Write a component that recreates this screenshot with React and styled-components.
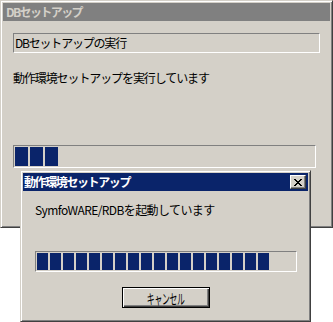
import React from "react";
import styled, { createGlobalStyle } from "styled-components";

const Global = createGlobalStyle`
  html, body { margin: 0; padding: 0; background: #ffffff; }
  body { font-family: "Noto Sans CJK JP", "Noto Sans", sans-serif; font-size: 12px; }
`;

const FACE = "#d4d0c8";
const NAVY = "#0a246a";

const Desktop = styled.div`
  position: relative;
  width: 333px;
  height: 322px;
  overflow: hidden;
  background: #ffffff;
`;

const Window = styled.div`
  box-sizing: border-box;
  background: ${FACE};
  border-style: solid;
  border-width: 1px;
  border-color: ${FACE} #404040 #404040 ${FACE};
  box-shadow: inset 1px 1px 0 #ffffff, inset -1px -1px 0 #808080;
  padding: 2px;
  display: flex;
  flex-direction: column;
`;

const MainWindow = styled(Window)`
  width: 333px;
  height: 228px;
`;

const Dialog = styled(Window)`
  position: absolute;
  left: 20px;
  top: 170px;
  width: 291px;
  height: 152px;
`;

const TitleBar = styled.div`
  height: 18px;
  flex: none;
  display: flex;
  align-items: center;
  justify-content: space-between;
  padding: 0 2px 0 ${(p) => p.$pad ?? 3}px;
  background: ${(p) => (p.$active ? NAVY : "#808080")};
  color: ${(p) => (p.$active ? "#ffffff" : FACE)};
  font-weight: bold;
  font-size: 12px;
  letter-spacing: ${(p) => p.$ls || 0}px;
  line-height: 18px;
  white-space: nowrap;
`;

const Client = styled.div`
  flex: 1;
  display: flex;
  flex-direction: column;
  padding: ${(p) => p.$pad};
`;

const StaticBox = styled.div`
  box-sizing: border-box;
  height: 20px;
  border-style: solid;
  border-width: 1px;
  border-color: #808080 #ffffff #ffffff #808080;
  padding: 0 0 0 1px;
  line-height: 17px;
  letter-spacing: -1.2px;
  color: #000;
  white-space: nowrap;
`;

const Label = styled.div`
  color: #000;
  line-height: 14px;
  white-space: nowrap;
  letter-spacing: ${(p) => p.$ls || 0}px;
  margin: ${(p) => p.$m || 0};
`;

const Progress = styled.div`
  box-sizing: border-box;
  width: ${(p) => p.$w}px;
  height: ${(p) => p.$h}px;
  border-style: solid;
  border-width: 1px;
  border-color: #808080 #ffffff #ffffff #808080;
  padding: 1px;
  display: flex;
  gap: 2px;
  margin: ${(p) => p.$m || 0};
  align-self: ${(p) => p.$align || "stretch"};
`;

const Block = styled.div`
  width: ${(p) => p.$w}px;
  height: 100%;
  background: ${NAVY};
  flex: none;
`;

const CloseBtn = styled.div`
  box-sizing: border-box;
  width: 16px;
  height: 14px;
  background: ${FACE};
  border-style: solid;
  border-width: 1px;
  border-color: #ffffff #404040 #404040 #ffffff;
  box-shadow: inset -1px -1px 0 #808080;
  display: flex;
  align-items: center;
  justify-content: center;
`;

const Button = styled.div`
  box-sizing: border-box;
  width: 88px;
  height: 21px;
  border: 1px solid #000;
  background: ${FACE};
  box-shadow: inset 1px 1px 0 #ffffff, inset -1px -1px 0 #404040, inset -2px -2px 0 #808080;
  display: flex;
  align-items: center;
  justify-content: center;
  color: #000;
  font-size: 14px;
  line-height: 16px;
  align-self: center;
  margin: ${(p) => p.$m || 0};
`;

const Narrow = styled.span`
  display: inline-block;
  transform: scaleX(0.56);
  white-space: nowrap;
  letter-spacing: -0.5px;
`;

function Blocks({ n, w }) {
  return Array.from({ length: n }, (_, i) => <Block key={i} $w={w} />);
}

export default function App() {
  return (
    <Desktop>
      <Global />
      <MainWindow>
        <TitleBar $ls={-1.6}>DBセットアップ</TitleBar>
        <Client $pad="12px 10px 0 10px">
          <StaticBox>DBセットアップの実行</StaticBox>
          <Label $m="18px 0 0 0" $ls={-1.1}>動作環境セットアップを実行しています</Label>
          <Progress $w={303} $h={23} $m="60px 0 0 0">
            <Blocks n={3} w={13} />
          </Progress>
        </Client>
      </MainWindow>
      <Dialog>
        <TitleBar $active $pad={1} $ls={-1.4}>
          <span>動作環境セットアップ</span>
          <CloseBtn>
            <svg width="8" height="7" viewBox="0 0 8 7" shapeRendering="crispEdges">
              <path
                fill="#000"
                d="M0 0h2v1h-2zM6 0h2v1h-2zM1 1h2v1h-2zM5 1h2v1h-2zM2 2h4v1h-4zM3 3h2v1h-2zM2 4h4v1h-4zM1 5h2v1h-2zM5 5h2v1h-2zM0 6h2v1h-2zM6 6h2v1h-2z"
              />
            </svg>
          </CloseBtn>
        </TitleBar>
        <Client $pad="0">
          <Label $m="12px 0 0 12px" $ls={-0.6}>SymfoWARE/RDBを起動しています</Label>
          <Progress $w={262} $h={21} $m="34px 0 0 0" $align="center">
            <Blocks n={18} w={11} />
          </Progress>
          <Button $m="15px 0 0 0">
            <Narrow>キャンセル</Narrow>
          </Button>
        </Client>
      </Dialog>
    </Desktop>
  );
}
